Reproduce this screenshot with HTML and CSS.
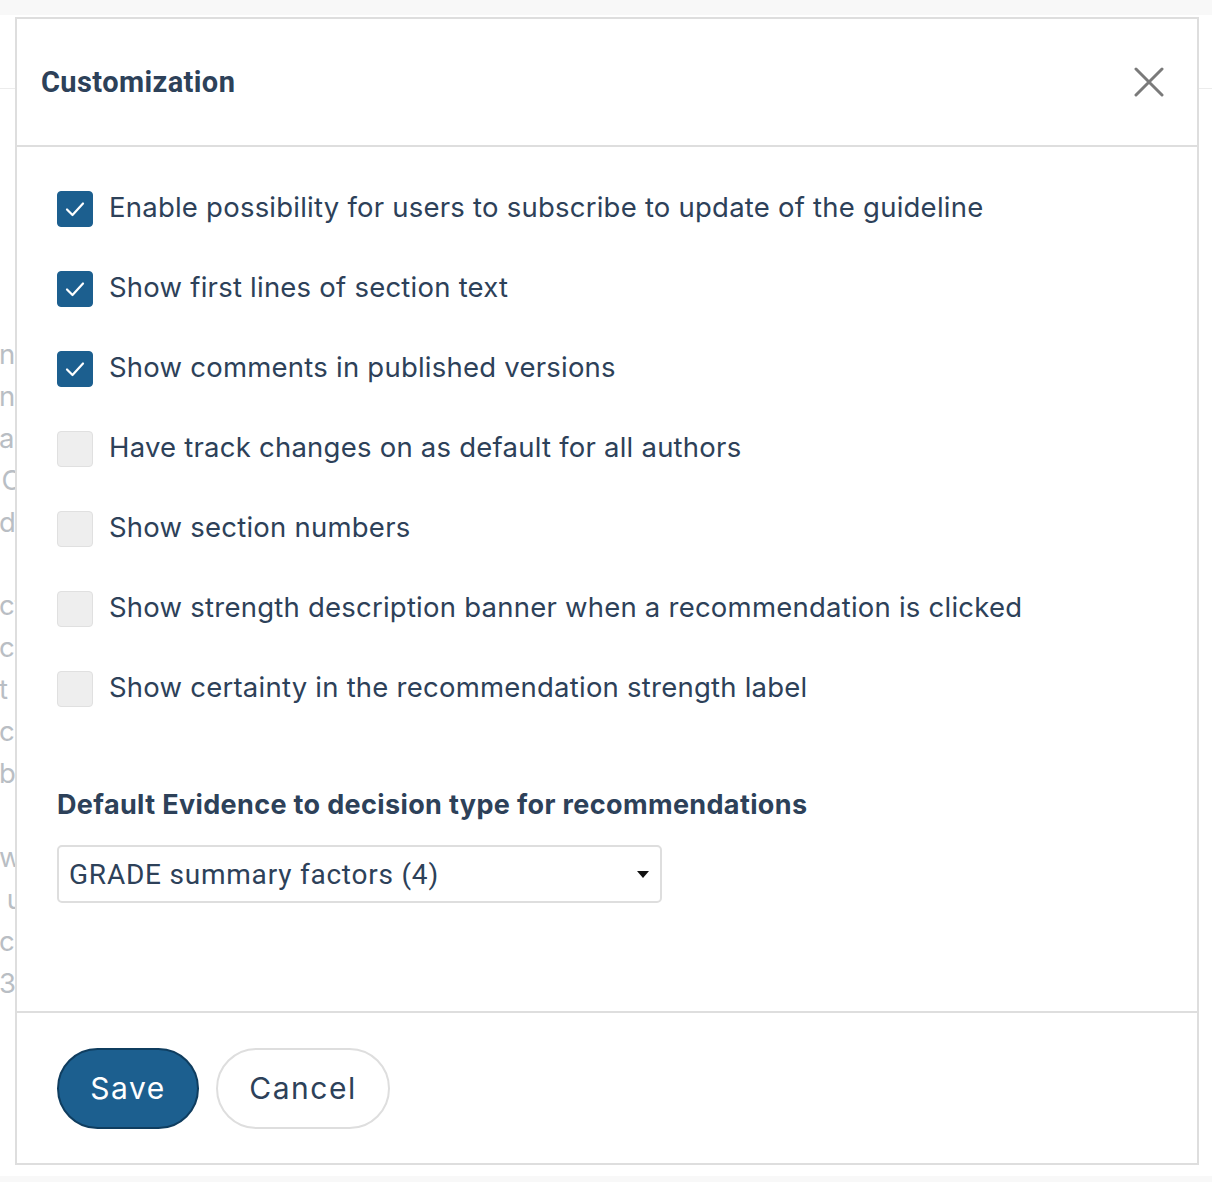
FILE: index.html
```html
<!DOCTYPE html>
<html>
<head>
<meta charset="utf-8">
<link rel="stylesheet" href="styles.css">
</head>
<body>
<div class="page">
  <div class="topbar"></div>
  <div class="pagehead"></div>
  <div class="bgtext">
    <div class="bgline">n</div>
    <div class="bgline">n</div>
    <div class="bgline">a</div>
    <div class="bgline">&#8202;C</div>
    <div class="bgline">d</div>
    <div class="bgline">&nbsp;</div>
    <div class="bgline">ct</div>
    <div class="bgline">ce</div>
    <div class="bgline">t</div>
    <div class="bgline">c</div>
    <div class="bgline">ba</div>
    <div class="bgline">&nbsp;</div>
    <div class="bgline">w</div>
    <div class="bgline">&nbsp;u</div>
    <div class="bgline">cs</div>
    <div class="bgline">3]</div>
  </div>
  <div class="bottombar"></div>

  <div class="modal">
    <div class="modal-header">
      <h2 class="modal-title">Customization</h2>
      <button class="close-btn" aria-label="Close">
        <svg width="30" height="30" viewBox="0 0 30 30"><path d="M2 2 L28 28 M28 2 L2 28" stroke="#7a7a7a" stroke-width="3" stroke-linecap="round" fill="none"/></svg>
      </button>
    </div>
    <div class="modal-body">
      <div class="options">
        <label class="option"><span class="cb checked"><svg width="22" height="22" viewBox="0 0 22 22"><path d="M3 11.5 L8.5 17 L19 5.5" stroke="#fff" stroke-width="2.2" fill="none" stroke-linecap="round" stroke-linejoin="round"/></svg></span><span class="opt-text">Enable possibility for users to subscribe to update of the guideline</span></label>
        <label class="option"><span class="cb checked"><svg width="22" height="22" viewBox="0 0 22 22"><path d="M3 11.5 L8.5 17 L19 5.5" stroke="#fff" stroke-width="2.2" fill="none" stroke-linecap="round" stroke-linejoin="round"/></svg></span><span class="opt-text">Show first lines of section text</span></label>
        <label class="option"><span class="cb checked"><svg width="22" height="22" viewBox="0 0 22 22"><path d="M3 11.5 L8.5 17 L19 5.5" stroke="#fff" stroke-width="2.2" fill="none" stroke-linecap="round" stroke-linejoin="round"/></svg></span><span class="opt-text">Show comments in published versions</span></label>
        <label class="option"><span class="cb"></span><span class="opt-text">Have track changes on as default for all authors</span></label>
        <label class="option"><span class="cb"></span><span class="opt-text">Show section numbers</span></label>
        <label class="option"><span class="cb"></span><span class="opt-text">Show strength description banner when a recommendation is clicked</span></label>
        <label class="option"><span class="cb"></span><span class="opt-text">Show certainty in the recommendation strength label</span></label>
      </div>
      <h3 class="section-title">Default Evidence to decision type for recommendations</h3>
      <div class="select">
        <span class="select-text">GRADE summary factors (4)</span>
        <span class="caret"></span>
      </div>
    </div>
    <div class="modal-footer">
      <button class="btn btn-primary">Save</button>
      <button class="btn btn-secondary">Cancel</button>
    </div>
  </div>
</div>
</body>
</html>
```

FILE: styles.css
```css
* { box-sizing: border-box; }
html, body { margin: 0; padding: 0; background: #fff; }
body { font-family: Inter, "Noto Sans", sans-serif; color: #2d4159; }

.page {
  position: relative;
  width: 1212px;
  height: 1182px;
  overflow: hidden;
  background: #fff;
}
.topbar { height: 15px; background: #f8f8f8; }
.pagehead { height: 74px; border-bottom: 1px solid #ececec; }
.bgtext {
  padding-top: 245px;
  margin-left: -1px;
  font-family: Inter, sans-serif;
  font-size: 27.5px;
  line-height: 41.9px;
  color: #b9bec4;
}
.bgline { white-space: nowrap; }
.bottombar {
  position: absolute;
  left: 0; right: 0; bottom: 0;
  height: 6px;
  background: #f8f8f8;
}

.modal {
  position: absolute;
  left: 15px;
  top: 17px;
  width: 1184px;
  height: 1148px;
  border: 2px solid #dedede;
  background: #fff;
  display: flex;
  flex-direction: column;
}
.modal-header {
  height: 128px;
  flex-shrink: 0;
  border-bottom: 2px solid #dedede;
  display: flex;
  align-items: center;
  justify-content: space-between;
  padding: 0 33px 0 24px;
}
.modal-title {
  margin: 0 0 1px 0;
  font-family: Roboto, sans-serif;
  font-weight: 700;
  font-size: 29px;
  color: #2d4159;
  letter-spacing: 0.4px;
}
.close-btn {
  background: none;
  border: 0;
  padding: 0;
  width: 30px;
  height: 30px;
  display: flex;
  cursor: pointer;
}
.modal-body {
  flex: 1;
  padding: 44px 40px 0 40px;
  border-bottom: 2px solid #dedede;
}
.options { display: flex; flex-direction: column; gap: 44px; }
.option {
  display: flex;
  align-items: center;
  gap: 16px;
  height: 36px;
}
.cb {
  width: 36px;
  height: 36px;
  border-radius: 4px;
  background: #eeeeee;
  border: 1px solid #e0e0e0;
  display: flex;
  align-items: center;
  justify-content: center;
  flex-shrink: 0;
}
.cb.checked { background: #1c5f8f; border-color: #1c5f8f; }
.opt-text {
  font-size: 27.5px;
  letter-spacing: 0.23px;
  color: #2d4159;
  white-space: nowrap;
  margin-bottom: 5px;
}
.section-title {
  margin: 81px 0 0 0;
  font-family: Inter, sans-serif;
  font-weight: 700;
  font-size: 27px;
  line-height: 34px;
  letter-spacing: 0.36px;
  color: #2d4159;
}
.select {
  margin-top: 23px;
  width: 605px;
  height: 58px;
  border: 2px solid #dedede;
  border-radius: 5px;
  display: flex;
  align-items: center;
  justify-content: space-between;
  padding: 0 11px 0 10px;
}
.select-text {
  font-family: Roboto, sans-serif;
  font-size: 28px;
  letter-spacing: 0.78px;
  color: #2d4159;
}
.caret {
  width: 0; height: 0;
  border-left: 6.5px solid transparent;
  border-right: 6.5px solid transparent;
  border-top: 7px solid #111;
}
.modal-footer {
  height: 150px;
  flex-shrink: 0;
  display: flex;
  align-items: center;
  gap: 17px;
  padding: 0 40px;
}
.btn {
  height: 81px;
  border-radius: 41px;
  font-family: Inter, sans-serif;
  font-size: 30px;
  letter-spacing: 1.5px;
  padding: 0;
  cursor: pointer;
}
.btn-primary {
  width: 142px;
  background: #1c5f8f;
  border: 2px solid #0f3d5f;
  color: #fff;
}
.btn-secondary {
  width: 174px;
  background: #fff;
  border: 2px solid #dedede;
  color: #2d4159;
}
```
